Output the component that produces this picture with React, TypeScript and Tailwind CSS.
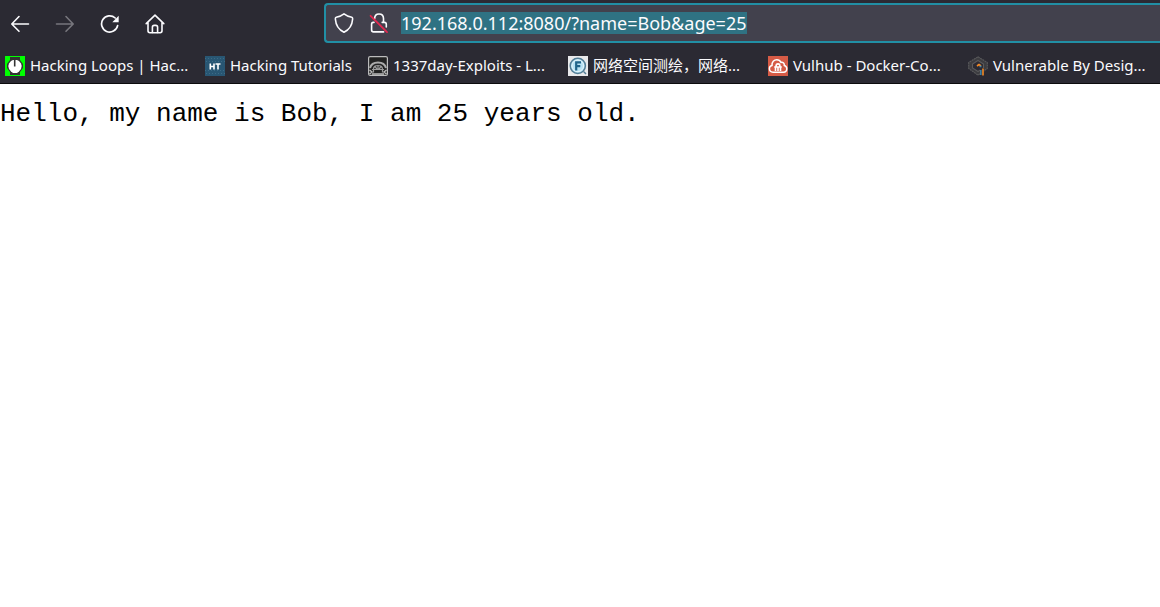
import { useState, type ReactNode } from 'react';

interface Bookmark {
  title: string;
  icon: ReactNode;
  width: string;
}

function BackIcon() {
  return (
    <svg className="w-5 h-5" viewBox="0 0 20 20" fill="none" stroke="currentColor" strokeWidth="1.6" strokeLinecap="round" strokeLinejoin="round">
      <path d="M18.5 10H2M9 2.5L1.8 10L9 17.3" />
    </svg>
  );
}

function ForwardIcon() {
  return (
    <svg className="w-5 h-5" viewBox="0 0 20 20" fill="none" stroke="currentColor" strokeWidth="1.6" strokeLinecap="round" strokeLinejoin="round">
      <path d="M1.5 10H18M11 2.5L18.2 10L11 17.3" />
    </svg>
  );
}

function ReloadIcon() {
  return (
    <svg className="w-5 h-5" viewBox="0 0 20 20" fill="none" stroke="currentColor" strokeWidth="1.7" strokeLinecap="round">
      <path d="M17.6 11.6A8.1 8.1 0 1 1 15.2 4" />
      <path d="M18.7 1.8v6.4h-6.4z" fill="currentColor" stroke="none" />
    </svg>
  );
}

function HomeIcon() {
  return (
    <svg className="w-5 h-5" viewBox="0 0 20 20" fill="none" stroke="currentColor" strokeWidth="1.6" strokeLinecap="round" strokeLinejoin="round">
      <path d="M1.2 9.6L10 1.2L18.8 9.6M3 8.2V16.8Q3 18.7 4.9 18.7H15.1Q17 18.7 17 16.8V8.2" />
      <path d="M7.4 18.5v-5.3q0-1.8 1.8-1.8h1.6q1.8 0 1.8 1.8v5.3" />
    </svg>
  );
}

function ShieldIcon() {
  return (
    <svg className="w-5 h-5" viewBox="0 0 20 20" fill="none" stroke="currentColor" strokeWidth="1.6" strokeLinejoin="round">
      <path d="M10 .9C8 2.5 4.6 3.8 2.2 4.2C1.2 4.4 1.3 5.2 1.4 6.2C1.8 12 4.4 16.5 10 19.2C15.6 16.5 18.2 12 18.6 6.2C18.7 5.2 18.8 4.4 17.8 4.2C15.4 3.8 12 2.5 10 .9z" />
    </svg>
  );
}

function InsecureIcon() {
  return (
    <svg className="w-5 h-5" viewBox="0 0 20 20" fill="none" stroke="currentColor" strokeWidth="1.6" strokeLinecap="round">
      <path d="M5.6 5.6C5.7 2.7 7.4 1 10 1S14.5 2.8 14.5 5.6V9.4M13.2 9.4H15.4Q17.3 9.4 17.3 11.3V14M5 9.4H4.3Q2.6 9.4 2.6 11.2V17Q2.6 18.9 4.5 18.9H14.6" />
      <path d="M1.6 2.8L18 19.2" stroke="#e22850" strokeWidth="1.8" />
    </svg>
  );
}

function LoopsFavicon() {
  return (
    <svg className="w-5 h-5" viewBox="0 0 20 20">
      <path fill="#00ff00" d="M0 0h20v20H0z" />
      <path fill="#343434" d="M5 1h10v3l3 4v4l-3 4v3H5v-3l-3-4V8l3-4z" />
      <path fill="#fff" d="M6 5l2-1h4l2 1 2 2.5.7 2.5-.7 3-2 2.5-2 1.500H8l-2-1.5L4 13l-.7-3L4 7.5z" />
      <path stroke="#343434" strokeWidth="1.6" d="M9.7 4v6.5" />
    </svg>
  );
}

function TutorialsFavicon() {
  return (
    <svg className="w-5 h-5" viewBox="0 0 20 20">
      <path fill="#285673" d="M0 0h20v20H0z" />
      <path stroke="#3c6b86" strokeWidth="1" strokeDasharray="1 2" d="M0 2.5h20M1 5.5h19M0 14.5h20M1 17.5h19" />
      <path fill="none" stroke="#fff" strokeWidth="1.6" d="M5.3 7.5v6M9 7.5v6M5.3 10.5H9M10.5 8h5M13 8v5.5" />
    </svg>
  );
}

function ExploitsFavicon() {
  return (
    <svg className="w-5 h-5" viewBox="0 0 20 20" fill="none">
      <rect x=".6" y=".6" width="18.8" height="18.8" rx="1.5" fill="#222" stroke="#bbb" strokeWidth="1.2" />
      <path d="M2 12C3 8 6 6.4 10 6.4S17 8 18 12" stroke="#aaa" strokeWidth="2" />
      <path d="M5.5 16.5V13q0-3.5 4.5-3.5t4.500 3.500v3.500M10 9v4M4 13.5h12M6.5 10l2.500 3M13.5 10L11 13" stroke="#999" strokeWidth="1.2" />
      <path d="M1.5 14l2.500 2-2.500 2M18.5 14L16 16l2.500 2M4 18h12" stroke="#bbb" strokeWidth="1.4" />
    </svg>
  );
}

function FofaFavicon() {
  return (
    <svg className="w-5 h-5" viewBox="0 0 20 20">
      <path fill="#e8e9eb" d="M0 0h20v20H0z" />
      <circle cx="9.8" cy="9.8" r="7.6" fill="#b8e2f4" stroke="#527d96" strokeWidth="1.5" />
      <circle cx="9.8" cy="9.8" r="5.8" fill="none" stroke="#e4f5fb" />
      <path fill="none" stroke="#1f648a" strokeWidth="2.2" d="M8.2 14.5V6.3H13M8 10.2h4.3" />
      <path stroke="#527d96" strokeWidth="1.5" d="M15.8 15.8L18 18" />
    </svg>
  );
}

function VulhubFavicon() {
  return (
    <svg className="w-5 h-5" viewBox="0 0 20 20" fill="none" stroke="#fff">
      <path fill="#d65b46" stroke="none" d="M0 0h20v20H0z" />
      <path strokeWidth="1.5" d="M5 16.2C2.8 16.2 1.4 14.8 1.4 12.8C1.4 11 2.5 9.8 4 9.5C3.8 6 6 3.8 8.8 3.8C10.7 3.8 12.2 4.8 13 6.4C15.2 6 16.5 7.4 16.3 9.4C18 9.8 18.8 11 18.8 12.8C18.8 14.8 17.4 16.2 15.4 16.2z" />
      <path strokeWidth="1.6" d="M8 10.5C8 7 12 7 12 10.500M6.2 11h7.6M7.5 11v4M12.500 11v4M10 11v4" />
    </svg>
  );
}

function VulnhubFavicon() {
  return (
    <svg className="w-5 h-5" viewBox="0 0 20 20" fill="none">
      <path fill="#3c3c40" stroke="#5a5a5c" strokeWidth="1.1" strokeDasharray="2 .6" d="M10 .8L19.3 6.5v6L10 19.2L.7 12.5v-6z" />
      <path fill="#2b2a33" stroke="#5a5a5c" strokeWidth="1.1" d="M10 4.5L15.5 8v4L10 15.5L4.5 12V8z" />
      <path fill="#2b2a33" d="M12 12h4v8h-4z" />
      <path stroke="#f58a25" strokeWidth="1.6" d="M9 10l2-1.5 2 1.5M15 12.5v7" />
      <path stroke="#3c83aa" strokeWidth="1.5" d="M11.5 10.5h2M12.8 14v5" />
    </svg>
  );
}

const bookmarks: Bookmark[] = [
  { title: 'Hacking Loops | Hac...', icon: <LoopsFavicon />, width: 'w-[200px]' },
  { title: 'Hacking Tutorials', icon: <TutorialsFavicon />, width: 'w-[163px]' },
  { title: '1337day-Exploits - L...', icon: <ExploitsFavicon />, width: 'w-[200px]' },
  { title: '网络空间测绘，网络...', icon: <FofaFavicon />, width: 'w-[200px]' },
  { title: 'Vulhub - Docker-Co...', icon: <VulhubFavicon />, width: 'w-[200px]' },
  { title: 'Vulnerable By Desig...', icon: <VulnhubFavicon />, width: 'w-[187px]' },
];

export default function App() {
  const [url, setUrl] = useState('192.168.0.112:8080/?name=Bob&age=25');

  return (
    <div className="min-h-screen overflow-hidden bg-white">
      <header className="bg-[#2b2a33] text-[#fbfbfe] border-b border-[#0c0c0d] font-['Noto_Sans','Noto_Sans_CJK_SC',sans-serif]">
        {/* Navigation toolbar */}
        <div className="flex items-center h-12">
          <nav className="flex items-center gap-[25px] pl-2.5 w-81 shrink-0">
            <button aria-label="Back"><BackIcon /></button>
            <button aria-label="Forward" disabled className="text-[#77767d]"><ForwardIcon /></button>
            <button aria-label="Reload"><ReloadIcon /></button>
            <button aria-label="Home"><HomeIcon /></button>
          </nav>
          <div className="flex flex-1 items-center h-10 mb-0.5 pl-2 bg-[#42414d] border-2 border-r-0 border-[#218fa5] rounded-l">
            <button aria-label="Tracking protection"><ShieldIcon /></button>
            <button aria-label="Connection not secure" className="ml-[15px] mr-3"><InsecureIcon /></button>
            <input
              aria-label="Address"
              type="text"
              value={url}
              onChange={e => setUrl(e.target.value)}
              spellCheck={false}
              className="field-sizing-content h-[22px] bg-[#2f7283] text-[18px] leading-[22px] outline-none"
            />
          </div>
        </div>

        {/* Bookmarks toolbar */}
        <div className="flex h-[35px] items-center pl-[5px] overflow-hidden">
          {bookmarks.map(b => (
            <a key={b.title} href="#" className={`flex shrink-0 items-center gap-[5px] text-[15px] leading-5 whitespace-nowrap ${b.width}`}>
              {b.icon}
              <span className="pb-0.5">{b.title}</span>
            </a>
          ))}
        </div>
      </header>

      <main className="pt-3.5">
        <p className="font-['Liberation_Mono',monospace] text-[26px] leading-8 text-black">
          Hello, my name is Bob, I am 25 years old.
        </p>
      </main>
    </div>
  );
}
